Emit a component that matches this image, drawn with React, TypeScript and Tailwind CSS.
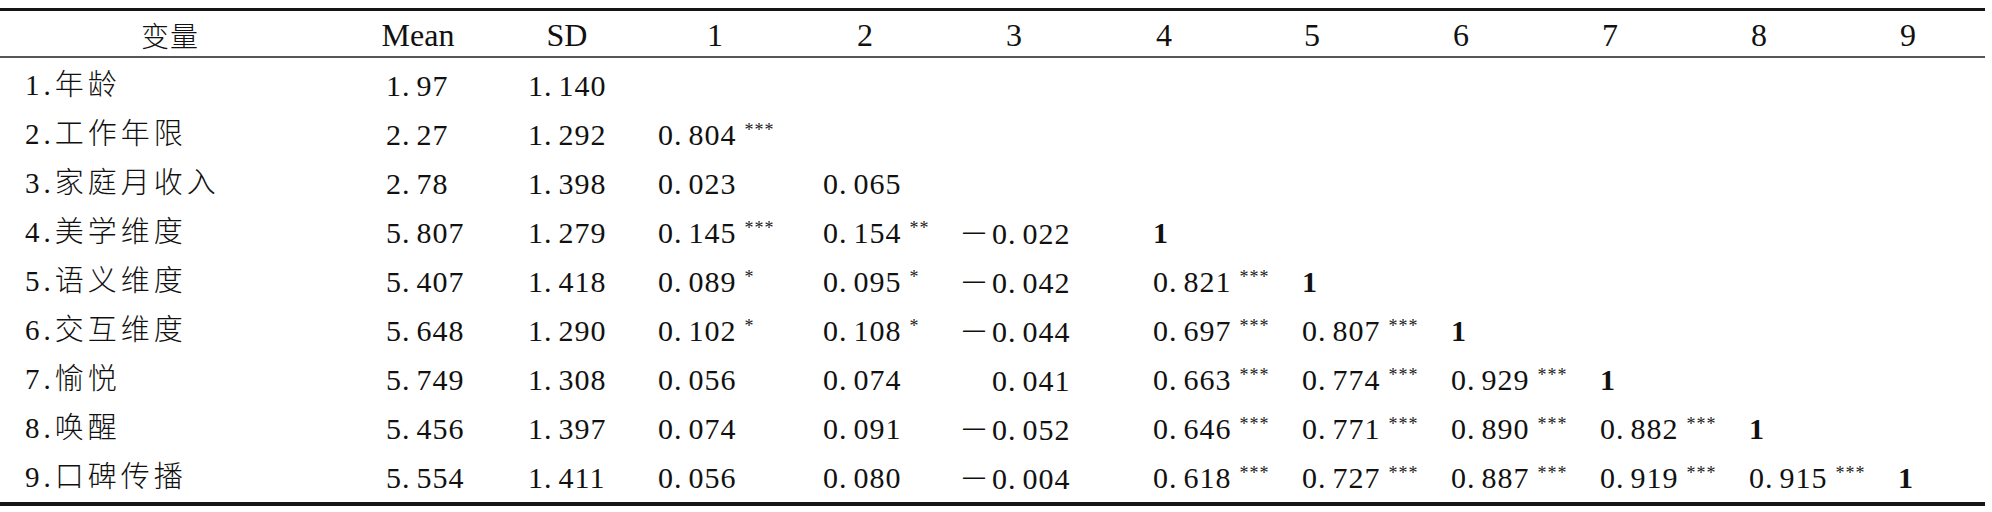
import React from "react";

const headers = ["变量", "Mean", "SD", "1", "2", "3", "4", "5", "6", "7", "8", "9"];

const rows: string[][] = [
  ["1.年龄", "1.97", "1.140"],
  ["2.工作年限", "2.27", "1.292", "0.804***"],
  ["3.家庭月收入", "2.78", "1.398", "0.023", "0.065"],
  ["4.美学维度", "5.807", "1.279", "0.145***", "0.154**", "-0.022", "1"],
  ["5.语义维度", "5.407", "1.418", "0.089*", "0.095*", "-0.042", "0.821***", "1"],
  ["6.交互维度", "5.648", "1.290", "0.102*", "0.108*", "-0.044", "0.697***", "0.807***", "1"],
  ["7.愉悦", "5.749", "1.308", "0.056", "0.074", "0.041", "0.663***", "0.774***", "0.929***", "1"],
  ["8.唤醒", "5.456", "1.397", "0.074", "0.091", "-0.052", "0.646***", "0.771***", "0.890***", "0.882***", "1"],
  ["9.口碑传播", "5.554", "1.411", "0.056", "0.080", "-0.004", "0.618***", "0.727***", "0.887***", "0.919***", "0.915***", "1"],
];

const Num = ({ v, pad }: { v: string; pad?: boolean }) => {
  if (v === "1") return <span className="font-bold text-[30px]">1</span>;
  const m = v.match(/^(-?)(\d+)\.(\d+)(\**)$/);
  if (!m) return <span>{v}</span>;
  const [, neg, int, frac, stars] = m;
  return (
    <span className="whitespace-nowrap tracking-[1px]">
      {neg ? (
        <span className="font-['Noto_Sans_CJK_SC',sans-serif] font-light mr-[2px]">－</span>
      ) : pad ? (
        <span className="invisible font-['Noto_Sans_CJK_SC',sans-serif] font-light mr-[2px]">－</span>
      ) : null}
      {int}
      <span className="mr-[6px]">.</span>
      {frac}
      {stars && <sup className="ml-[8px] text-[18px] tracking-[1px] text-[#222]">{stars}</sup>}
    </span>
  );
};

const App = () => {
  return (
    <div className="w-[1992px] h-[512px] bg-white pt-[8px] text-[#111] font-['Liberation_Serif','Noto_Sans_CJK_SC',serif]">
      <div className="w-[1985px] border-t-[3px] border-b-[4px] border-[#151515]">
        <div className="grid grid-cols-[340px_156px_142px_154px_146px_152px_148px_148px_150px_148px_150px_148px] h-[47px] items-center border-b-2 border-[#575757] text-[32px]">
          {headers.map((h, i) => (
            <div
              key={h}
              className={
                i === 0
                  ? "text-center text-[28px] font-light tracking-[1px] font-['Noto_Sans_CJK_SC',sans-serif]"
                  : "text-center"
              }
            >
              {h}
            </div>
          ))}
        </div>
        <div className="grid grid-cols-[386px_142px_130px_165px_136px_194px_149px_149px_149px_149px_149px_87px] auto-rows-[49px] items-center pt-[3px] text-[30px]">
          {rows.map((row, r) =>
            Array.from({ length: 12 }).map((_, c) => {
              const v = row[c];
              if (c === 0)
                return (
                  <div key={`${r}-${c}`} className="pl-[25px] text-[29px] font-light tracking-[4px] whitespace-nowrap">
                    {v}
                  </div>
                );
              return (
                <div key={`${r}-${c}`}>
                  {v ? <Num v={v} pad={c === 5} /> : null}
                </div>
              );
            })
          )}
        </div>
      </div>
    </div>
  );
};

export default App;
